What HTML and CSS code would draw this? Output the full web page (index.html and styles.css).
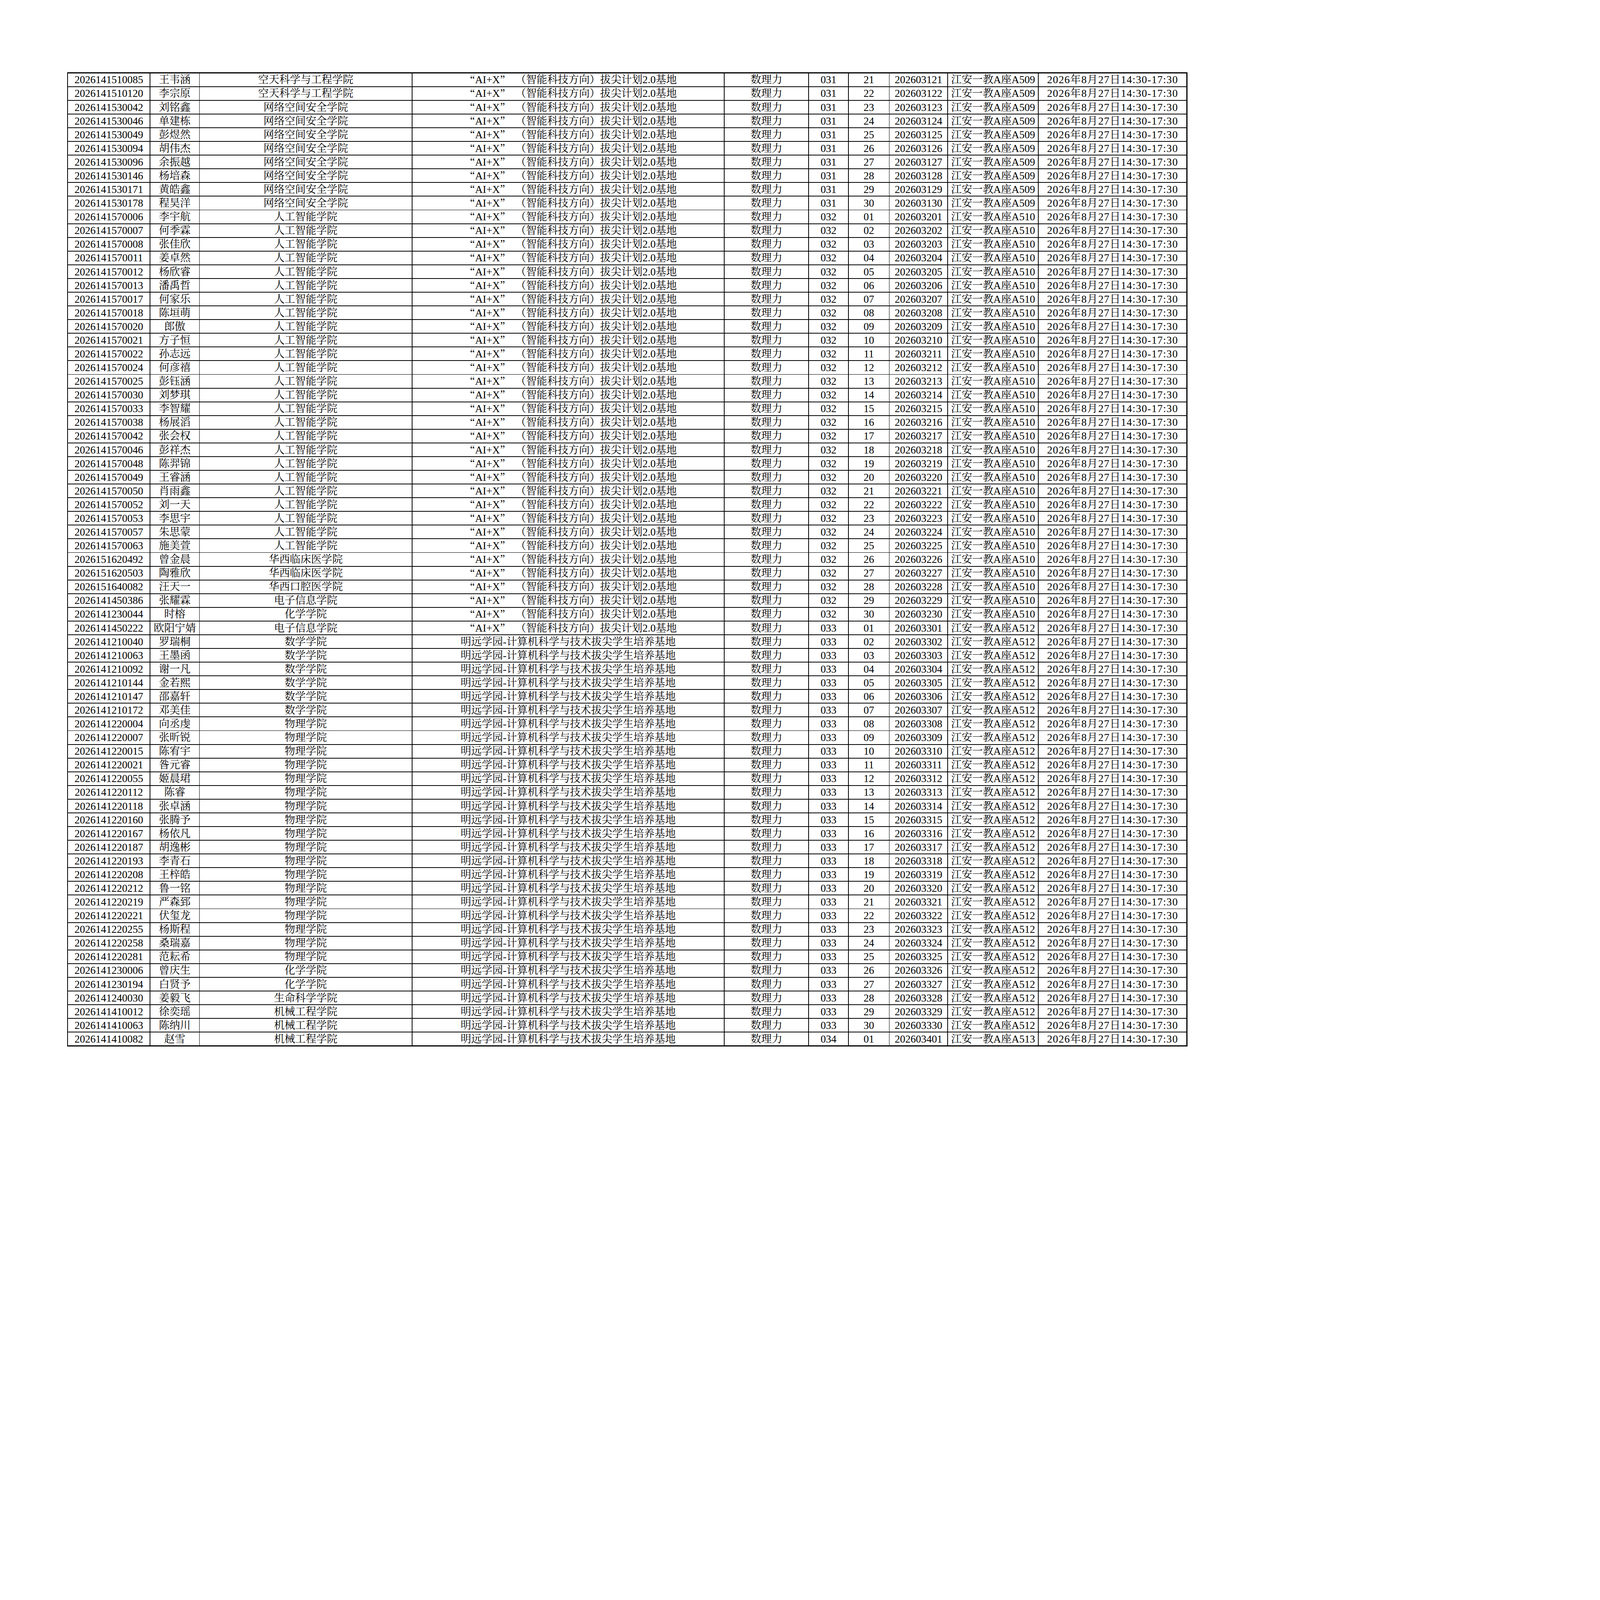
FILE: index.html
```html
<!DOCTYPE html>
<html lang="zh-CN">
<head>
<meta charset="utf-8">
<title>考场安排</title>
<link rel="stylesheet" href="styles.css">
</head>
<body>
<div class="sheet">
<div>2026141510085</div><div>王韦涵</div><div>空天科学与工程学院</div><div><span class="q">“</span>AI+X<span class="q">”</span>（智能科技方向）拔尖计划2.0基地</div><div>数理力</div><div>031</div><div>21</div><div>202603121</div><div>江安一教A座A509</div><div>2026年8月27日14:30-17:30</div>
<div>2026141510120</div><div>李宗原</div><div>空天科学与工程学院</div><div><span class="q">“</span>AI+X<span class="q">”</span>（智能科技方向）拔尖计划2.0基地</div><div>数理力</div><div>031</div><div>22</div><div>202603122</div><div>江安一教A座A509</div><div>2026年8月27日14:30-17:30</div>
<div>2026141530042</div><div>刘铭鑫</div><div>网络空间安全学院</div><div><span class="q">“</span>AI+X<span class="q">”</span>（智能科技方向）拔尖计划2.0基地</div><div>数理力</div><div>031</div><div>23</div><div>202603123</div><div>江安一教A座A509</div><div>2026年8月27日14:30-17:30</div>
<div>2026141530046</div><div>单建栋</div><div>网络空间安全学院</div><div><span class="q">“</span>AI+X<span class="q">”</span>（智能科技方向）拔尖计划2.0基地</div><div>数理力</div><div>031</div><div>24</div><div>202603124</div><div>江安一教A座A509</div><div>2026年8月27日14:30-17:30</div>
<div>2026141530049</div><div>彭煜然</div><div>网络空间安全学院</div><div><span class="q">“</span>AI+X<span class="q">”</span>（智能科技方向）拔尖计划2.0基地</div><div>数理力</div><div>031</div><div>25</div><div>202603125</div><div>江安一教A座A509</div><div>2026年8月27日14:30-17:30</div>
<div>2026141530094</div><div>胡伟杰</div><div>网络空间安全学院</div><div><span class="q">“</span>AI+X<span class="q">”</span>（智能科技方向）拔尖计划2.0基地</div><div>数理力</div><div>031</div><div>26</div><div>202603126</div><div>江安一教A座A509</div><div>2026年8月27日14:30-17:30</div>
<div>2026141530096</div><div>余振越</div><div>网络空间安全学院</div><div><span class="q">“</span>AI+X<span class="q">”</span>（智能科技方向）拔尖计划2.0基地</div><div>数理力</div><div>031</div><div>27</div><div>202603127</div><div>江安一教A座A509</div><div>2026年8月27日14:30-17:30</div>
<div>2026141530146</div><div>杨培森</div><div>网络空间安全学院</div><div><span class="q">“</span>AI+X<span class="q">”</span>（智能科技方向）拔尖计划2.0基地</div><div>数理力</div><div>031</div><div>28</div><div>202603128</div><div>江安一教A座A509</div><div>2026年8月27日14:30-17:30</div>
<div>2026141530171</div><div>黄皓鑫</div><div>网络空间安全学院</div><div><span class="q">“</span>AI+X<span class="q">”</span>（智能科技方向）拔尖计划2.0基地</div><div>数理力</div><div>031</div><div>29</div><div>202603129</div><div>江安一教A座A509</div><div>2026年8月27日14:30-17:30</div>
<div>2026141530178</div><div>程昊洋</div><div>网络空间安全学院</div><div><span class="q">“</span>AI+X<span class="q">”</span>（智能科技方向）拔尖计划2.0基地</div><div>数理力</div><div>031</div><div>30</div><div>202603130</div><div>江安一教A座A509</div><div>2026年8月27日14:30-17:30</div>
<div>2026141570006</div><div>李宇航</div><div>人工智能学院</div><div><span class="q">“</span>AI+X<span class="q">”</span>（智能科技方向）拔尖计划2.0基地</div><div>数理力</div><div>032</div><div>01</div><div>202603201</div><div>江安一教A座A510</div><div>2026年8月27日14:30-17:30</div>
<div>2026141570007</div><div>何季霖</div><div>人工智能学院</div><div><span class="q">“</span>AI+X<span class="q">”</span>（智能科技方向）拔尖计划2.0基地</div><div>数理力</div><div>032</div><div>02</div><div>202603202</div><div>江安一教A座A510</div><div>2026年8月27日14:30-17:30</div>
<div>2026141570008</div><div>张佳欣</div><div>人工智能学院</div><div><span class="q">“</span>AI+X<span class="q">”</span>（智能科技方向）拔尖计划2.0基地</div><div>数理力</div><div>032</div><div>03</div><div>202603203</div><div>江安一教A座A510</div><div>2026年8月27日14:30-17:30</div>
<div>2026141570011</div><div>姜卓然</div><div>人工智能学院</div><div><span class="q">“</span>AI+X<span class="q">”</span>（智能科技方向）拔尖计划2.0基地</div><div>数理力</div><div>032</div><div>04</div><div>202603204</div><div>江安一教A座A510</div><div>2026年8月27日14:30-17:30</div>
<div>2026141570012</div><div>杨欣睿</div><div>人工智能学院</div><div><span class="q">“</span>AI+X<span class="q">”</span>（智能科技方向）拔尖计划2.0基地</div><div>数理力</div><div>032</div><div>05</div><div>202603205</div><div>江安一教A座A510</div><div>2026年8月27日14:30-17:30</div>
<div>2026141570013</div><div>潘禹哲</div><div>人工智能学院</div><div><span class="q">“</span>AI+X<span class="q">”</span>（智能科技方向）拔尖计划2.0基地</div><div>数理力</div><div>032</div><div>06</div><div>202603206</div><div>江安一教A座A510</div><div>2026年8月27日14:30-17:30</div>
<div>2026141570017</div><div>何家乐</div><div>人工智能学院</div><div><span class="q">“</span>AI+X<span class="q">”</span>（智能科技方向）拔尖计划2.0基地</div><div>数理力</div><div>032</div><div>07</div><div>202603207</div><div>江安一教A座A510</div><div>2026年8月27日14:30-17:30</div>
<div>2026141570018</div><div>陈垣萌</div><div>人工智能学院</div><div><span class="q">“</span>AI+X<span class="q">”</span>（智能科技方向）拔尖计划2.0基地</div><div>数理力</div><div>032</div><div>08</div><div>202603208</div><div>江安一教A座A510</div><div>2026年8月27日14:30-17:30</div>
<div>2026141570020</div><div>郎傲</div><div>人工智能学院</div><div><span class="q">“</span>AI+X<span class="q">”</span>（智能科技方向）拔尖计划2.0基地</div><div>数理力</div><div>032</div><div>09</div><div>202603209</div><div>江安一教A座A510</div><div>2026年8月27日14:30-17:30</div>
<div>2026141570021</div><div>方子恒</div><div>人工智能学院</div><div><span class="q">“</span>AI+X<span class="q">”</span>（智能科技方向）拔尖计划2.0基地</div><div>数理力</div><div>032</div><div>10</div><div>202603210</div><div>江安一教A座A510</div><div>2026年8月27日14:30-17:30</div>
<div>2026141570022</div><div>孙志远</div><div>人工智能学院</div><div><span class="q">“</span>AI+X<span class="q">”</span>（智能科技方向）拔尖计划2.0基地</div><div>数理力</div><div>032</div><div>11</div><div>202603211</div><div>江安一教A座A510</div><div>2026年8月27日14:30-17:30</div>
<div>2026141570024</div><div>何彦禧</div><div>人工智能学院</div><div><span class="q">“</span>AI+X<span class="q">”</span>（智能科技方向）拔尖计划2.0基地</div><div>数理力</div><div>032</div><div>12</div><div>202603212</div><div>江安一教A座A510</div><div>2026年8月27日14:30-17:30</div>
<div>2026141570025</div><div>彭钰涵</div><div>人工智能学院</div><div><span class="q">“</span>AI+X<span class="q">”</span>（智能科技方向）拔尖计划2.0基地</div><div>数理力</div><div>032</div><div>13</div><div>202603213</div><div>江安一教A座A510</div><div>2026年8月27日14:30-17:30</div>
<div>2026141570030</div><div>刘梦琪</div><div>人工智能学院</div><div><span class="q">“</span>AI+X<span class="q">”</span>（智能科技方向）拔尖计划2.0基地</div><div>数理力</div><div>032</div><div>14</div><div>202603214</div><div>江安一教A座A510</div><div>2026年8月27日14:30-17:30</div>
<div>2026141570033</div><div>李智耀</div><div>人工智能学院</div><div><span class="q">“</span>AI+X<span class="q">”</span>（智能科技方向）拔尖计划2.0基地</div><div>数理力</div><div>032</div><div>15</div><div>202603215</div><div>江安一教A座A510</div><div>2026年8月27日14:30-17:30</div>
<div>2026141570038</div><div>杨展滔</div><div>人工智能学院</div><div><span class="q">“</span>AI+X<span class="q">”</span>（智能科技方向）拔尖计划2.0基地</div><div>数理力</div><div>032</div><div>16</div><div>202603216</div><div>江安一教A座A510</div><div>2026年8月27日14:30-17:30</div>
<div>2026141570042</div><div>张会权</div><div>人工智能学院</div><div><span class="q">“</span>AI+X<span class="q">”</span>（智能科技方向）拔尖计划2.0基地</div><div>数理力</div><div>032</div><div>17</div><div>202603217</div><div>江安一教A座A510</div><div>2026年8月27日14:30-17:30</div>
<div>2026141570046</div><div>彭祥杰</div><div>人工智能学院</div><div><span class="q">“</span>AI+X<span class="q">”</span>（智能科技方向）拔尖计划2.0基地</div><div>数理力</div><div>032</div><div>18</div><div>202603218</div><div>江安一教A座A510</div><div>2026年8月27日14:30-17:30</div>
<div>2026141570048</div><div>陈羿锦</div><div>人工智能学院</div><div><span class="q">“</span>AI+X<span class="q">”</span>（智能科技方向）拔尖计划2.0基地</div><div>数理力</div><div>032</div><div>19</div><div>202603219</div><div>江安一教A座A510</div><div>2026年8月27日14:30-17:30</div>
<div>2026141570049</div><div>王睿涵</div><div>人工智能学院</div><div><span class="q">“</span>AI+X<span class="q">”</span>（智能科技方向）拔尖计划2.0基地</div><div>数理力</div><div>032</div><div>20</div><div>202603220</div><div>江安一教A座A510</div><div>2026年8月27日14:30-17:30</div>
<div>2026141570050</div><div>肖雨鑫</div><div>人工智能学院</div><div><span class="q">“</span>AI+X<span class="q">”</span>（智能科技方向）拔尖计划2.0基地</div><div>数理力</div><div>032</div><div>21</div><div>202603221</div><div>江安一教A座A510</div><div>2026年8月27日14:30-17:30</div>
<div>2026141570052</div><div>刘一天</div><div>人工智能学院</div><div><span class="q">“</span>AI+X<span class="q">”</span>（智能科技方向）拔尖计划2.0基地</div><div>数理力</div><div>032</div><div>22</div><div>202603222</div><div>江安一教A座A510</div><div>2026年8月27日14:30-17:30</div>
<div>2026141570053</div><div>李思宇</div><div>人工智能学院</div><div><span class="q">“</span>AI+X<span class="q">”</span>（智能科技方向）拔尖计划2.0基地</div><div>数理力</div><div>032</div><div>23</div><div>202603223</div><div>江安一教A座A510</div><div>2026年8月27日14:30-17:30</div>
<div>2026141570057</div><div>朱思蒙</div><div>人工智能学院</div><div><span class="q">“</span>AI+X<span class="q">”</span>（智能科技方向）拔尖计划2.0基地</div><div>数理力</div><div>032</div><div>24</div><div>202603224</div><div>江安一教A座A510</div><div>2026年8月27日14:30-17:30</div>
<div>2026141570063</div><div>施美萱</div><div>人工智能学院</div><div><span class="q">“</span>AI+X<span class="q">”</span>（智能科技方向）拔尖计划2.0基地</div><div>数理力</div><div>032</div><div>25</div><div>202603225</div><div>江安一教A座A510</div><div>2026年8月27日14:30-17:30</div>
<div>2026151620492</div><div>曾金晨</div><div>华西临床医学院</div><div><span class="q">“</span>AI+X<span class="q">”</span>（智能科技方向）拔尖计划2.0基地</div><div>数理力</div><div>032</div><div>26</div><div>202603226</div><div>江安一教A座A510</div><div>2026年8月27日14:30-17:30</div>
<div>2026151620503</div><div>陶雅欣</div><div>华西临床医学院</div><div><span class="q">“</span>AI+X<span class="q">”</span>（智能科技方向）拔尖计划2.0基地</div><div>数理力</div><div>032</div><div>27</div><div>202603227</div><div>江安一教A座A510</div><div>2026年8月27日14:30-17:30</div>
<div>2026151640082</div><div>汪天一</div><div>华西口腔医学院</div><div><span class="q">“</span>AI+X<span class="q">”</span>（智能科技方向）拔尖计划2.0基地</div><div>数理力</div><div>032</div><div>28</div><div>202603228</div><div>江安一教A座A510</div><div>2026年8月27日14:30-17:30</div>
<div>2026141450386</div><div>张耀霖</div><div>电子信息学院</div><div><span class="q">“</span>AI+X<span class="q">”</span>（智能科技方向）拔尖计划2.0基地</div><div>数理力</div><div>032</div><div>29</div><div>202603229</div><div>江安一教A座A510</div><div>2026年8月27日14:30-17:30</div>
<div>2026141230044</div><div>时榕</div><div>化学学院</div><div><span class="q">“</span>AI+X<span class="q">”</span>（智能科技方向）拔尖计划2.0基地</div><div>数理力</div><div>032</div><div>30</div><div>202603230</div><div>江安一教A座A510</div><div>2026年8月27日14:30-17:30</div>
<div>2026141450222</div><div>欧阳宁婧</div><div>电子信息学院</div><div><span class="q">“</span>AI+X<span class="q">”</span>（智能科技方向）拔尖计划2.0基地</div><div>数理力</div><div>033</div><div>01</div><div>202603301</div><div>江安一教A座A512</div><div>2026年8月27日14:30-17:30</div>
<div>2026141210040</div><div>罗瑞桐</div><div>数学学院</div><div>明远学园-计算机科学与技术拔尖学生培养基地</div><div>数理力</div><div>033</div><div>02</div><div>202603302</div><div>江安一教A座A512</div><div>2026年8月27日14:30-17:30</div>
<div>2026141210063</div><div>王墨函</div><div>数学学院</div><div>明远学园-计算机科学与技术拔尖学生培养基地</div><div>数理力</div><div>033</div><div>03</div><div>202603303</div><div>江安一教A座A512</div><div>2026年8月27日14:30-17:30</div>
<div>2026141210092</div><div>谢一凡</div><div>数学学院</div><div>明远学园-计算机科学与技术拔尖学生培养基地</div><div>数理力</div><div>033</div><div>04</div><div>202603304</div><div>江安一教A座A512</div><div>2026年8月27日14:30-17:30</div>
<div>2026141210144</div><div>金若熙</div><div>数学学院</div><div>明远学园-计算机科学与技术拔尖学生培养基地</div><div>数理力</div><div>033</div><div>05</div><div>202603305</div><div>江安一教A座A512</div><div>2026年8月27日14:30-17:30</div>
<div>2026141210147</div><div>邵嘉轩</div><div>数学学院</div><div>明远学园-计算机科学与技术拔尖学生培养基地</div><div>数理力</div><div>033</div><div>06</div><div>202603306</div><div>江安一教A座A512</div><div>2026年8月27日14:30-17:30</div>
<div>2026141210172</div><div>邓美佳</div><div>数学学院</div><div>明远学园-计算机科学与技术拔尖学生培养基地</div><div>数理力</div><div>033</div><div>07</div><div>202603307</div><div>江安一教A座A512</div><div>2026年8月27日14:30-17:30</div>
<div>2026141220004</div><div>向丞虔</div><div>物理学院</div><div>明远学园-计算机科学与技术拔尖学生培养基地</div><div>数理力</div><div>033</div><div>08</div><div>202603308</div><div>江安一教A座A512</div><div>2026年8月27日14:30-17:30</div>
<div>2026141220007</div><div>张昕锐</div><div>物理学院</div><div>明远学园-计算机科学与技术拔尖学生培养基地</div><div>数理力</div><div>033</div><div>09</div><div>202603309</div><div>江安一教A座A512</div><div>2026年8月27日14:30-17:30</div>
<div>2026141220015</div><div>陈宥宇</div><div>物理学院</div><div>明远学园-计算机科学与技术拔尖学生培养基地</div><div>数理力</div><div>033</div><div>10</div><div>202603310</div><div>江安一教A座A512</div><div>2026年8月27日14:30-17:30</div>
<div>2026141220021</div><div>昝元睿</div><div>物理学院</div><div>明远学园-计算机科学与技术拔尖学生培养基地</div><div>数理力</div><div>033</div><div>11</div><div>202603311</div><div>江安一教A座A512</div><div>2026年8月27日14:30-17:30</div>
<div>2026141220055</div><div>姬晨珺</div><div>物理学院</div><div>明远学园-计算机科学与技术拔尖学生培养基地</div><div>数理力</div><div>033</div><div>12</div><div>202603312</div><div>江安一教A座A512</div><div>2026年8月27日14:30-17:30</div>
<div>2026141220112</div><div>陈睿</div><div>物理学院</div><div>明远学园-计算机科学与技术拔尖学生培养基地</div><div>数理力</div><div>033</div><div>13</div><div>202603313</div><div>江安一教A座A512</div><div>2026年8月27日14:30-17:30</div>
<div>2026141220118</div><div>张卓涵</div><div>物理学院</div><div>明远学园-计算机科学与技术拔尖学生培养基地</div><div>数理力</div><div>033</div><div>14</div><div>202603314</div><div>江安一教A座A512</div><div>2026年8月27日14:30-17:30</div>
<div>2026141220160</div><div>张腾予</div><div>物理学院</div><div>明远学园-计算机科学与技术拔尖学生培养基地</div><div>数理力</div><div>033</div><div>15</div><div>202603315</div><div>江安一教A座A512</div><div>2026年8月27日14:30-17:30</div>
<div>2026141220167</div><div>杨依凡</div><div>物理学院</div><div>明远学园-计算机科学与技术拔尖学生培养基地</div><div>数理力</div><div>033</div><div>16</div><div>202603316</div><div>江安一教A座A512</div><div>2026年8月27日14:30-17:30</div>
<div>2026141220187</div><div>胡逸彬</div><div>物理学院</div><div>明远学园-计算机科学与技术拔尖学生培养基地</div><div>数理力</div><div>033</div><div>17</div><div>202603317</div><div>江安一教A座A512</div><div>2026年8月27日14:30-17:30</div>
<div>2026141220193</div><div>李青石</div><div>物理学院</div><div>明远学园-计算机科学与技术拔尖学生培养基地</div><div>数理力</div><div>033</div><div>18</div><div>202603318</div><div>江安一教A座A512</div><div>2026年8月27日14:30-17:30</div>
<div>2026141220208</div><div>王梓皓</div><div>物理学院</div><div>明远学园-计算机科学与技术拔尖学生培养基地</div><div>数理力</div><div>033</div><div>19</div><div>202603319</div><div>江安一教A座A512</div><div>2026年8月27日14:30-17:30</div>
<div>2026141220212</div><div>鲁一铭</div><div>物理学院</div><div>明远学园-计算机科学与技术拔尖学生培养基地</div><div>数理力</div><div>033</div><div>20</div><div>202603320</div><div>江安一教A座A512</div><div>2026年8月27日14:30-17:30</div>
<div>2026141220219</div><div>严森郅</div><div>物理学院</div><div>明远学园-计算机科学与技术拔尖学生培养基地</div><div>数理力</div><div>033</div><div>21</div><div>202603321</div><div>江安一教A座A512</div><div>2026年8月27日14:30-17:30</div>
<div>2026141220221</div><div>伏玺龙</div><div>物理学院</div><div>明远学园-计算机科学与技术拔尖学生培养基地</div><div>数理力</div><div>033</div><div>22</div><div>202603322</div><div>江安一教A座A512</div><div>2026年8月27日14:30-17:30</div>
<div>2026141220255</div><div>杨斯程</div><div>物理学院</div><div>明远学园-计算机科学与技术拔尖学生培养基地</div><div>数理力</div><div>033</div><div>23</div><div>202603323</div><div>江安一教A座A512</div><div>2026年8月27日14:30-17:30</div>
<div>2026141220258</div><div>桑瑞嘉</div><div>物理学院</div><div>明远学园-计算机科学与技术拔尖学生培养基地</div><div>数理力</div><div>033</div><div>24</div><div>202603324</div><div>江安一教A座A512</div><div>2026年8月27日14:30-17:30</div>
<div>2026141220281</div><div>范耘希</div><div>物理学院</div><div>明远学园-计算机科学与技术拔尖学生培养基地</div><div>数理力</div><div>033</div><div>25</div><div>202603325</div><div>江安一教A座A512</div><div>2026年8月27日14:30-17:30</div>
<div>2026141230006</div><div>曾庆生</div><div>化学学院</div><div>明远学园-计算机科学与技术拔尖学生培养基地</div><div>数理力</div><div>033</div><div>26</div><div>202603326</div><div>江安一教A座A512</div><div>2026年8月27日14:30-17:30</div>
<div>2026141230194</div><div>白贤予</div><div>化学学院</div><div>明远学园-计算机科学与技术拔尖学生培养基地</div><div>数理力</div><div>033</div><div>27</div><div>202603327</div><div>江安一教A座A512</div><div>2026年8月27日14:30-17:30</div>
<div>2026141240030</div><div>姜毅飞</div><div>生命科学学院</div><div>明远学园-计算机科学与技术拔尖学生培养基地</div><div>数理力</div><div>033</div><div>28</div><div>202603328</div><div>江安一教A座A512</div><div>2026年8月27日14:30-17:30</div>
<div>2026141410012</div><div>徐奕瑶</div><div>机械工程学院</div><div>明远学园-计算机科学与技术拔尖学生培养基地</div><div>数理力</div><div>033</div><div>29</div><div>202603329</div><div>江安一教A座A512</div><div>2026年8月27日14:30-17:30</div>
<div>2026141410063</div><div>陈纳川</div><div>机械工程学院</div><div>明远学园-计算机科学与技术拔尖学生培养基地</div><div>数理力</div><div>033</div><div>30</div><div>202603330</div><div>江安一教A座A512</div><div>2026年8月27日14:30-17:30</div>
<div>2026141410082</div><div>赵雪</div><div>机械工程学院</div><div>明远学园-计算机科学与技术拔尖学生培养基地</div><div>数理力</div><div>034</div><div>01</div><div>202603401</div><div>江安一教A座A513</div><div>2026年8月27日14:30-17:30</div>
</div>
</body>
</html>
```

FILE: styles.css
```css
:root {
  /* one unit = one pixel of the 6350px-wide sheet, whatever the CSS viewport is */
  --u: calc(100vw / 6350);
}

html, body {
  margin: 0;
  padding: 0;
  background: #fff;
}

body {
  font-family: "Liberation Serif", "Noto Serif CJK SC", "Noto Sans CJK SC", serif;
  font-size: calc(var(--u) * 42);
  color: #000;
}

.sheet {
  display: grid;
  grid-template-columns:
    calc(var(--u) * 324) calc(var(--u) * 193) calc(var(--u) * 841) calc(var(--u) * 1236)
    calc(var(--u) * 332) calc(var(--u) * 155) calc(var(--u) * 159) calc(var(--u) * 229)
    calc(var(--u) * 357) calc(var(--u) * 586);
  grid-auto-rows: calc(var(--u) * 51.41);
  gap: calc(var(--u) * 3);
  padding: calc(var(--u) * 4);
  background: #000;
  width: max-content;
  margin-top: calc(var(--u) * 287);
  margin-left: calc(var(--u) * 266);
}

.sheet > div {
  background: #fff;
  display: flex;
  align-items: center;
  justify-content: center;
  line-height: calc(var(--u) * 46);
  white-space: nowrap;
  box-sizing: border-box;
  padding-top: calc(var(--u) * 3);
}

/* exam date/time column: the original's digits and colons are a little wider */
.sheet > div:nth-child(10n) {
  letter-spacing: calc(var(--u) * 2);
}

/* full-width curly quotes as in the original Song typeface */
.q {
  font-family: "Noto Serif CJK SC", "Noto Sans CJK SC", sans-serif;
  line-height: 1;
}

.q:first-child {
  padding-left: calc(var(--u) * 20);
}

.q:not(:first-child) {
  padding-right: calc(var(--u) * 20);
}
```
